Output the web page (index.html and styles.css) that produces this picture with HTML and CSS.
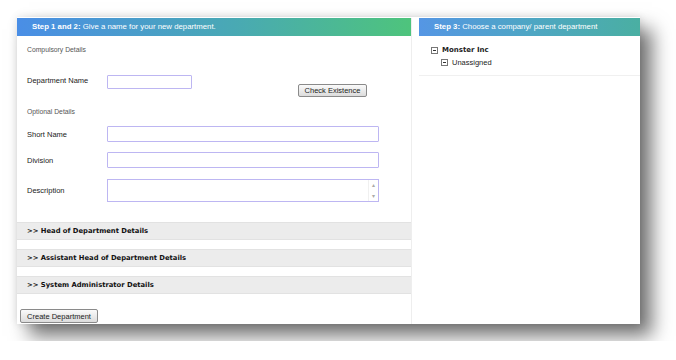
FILE: index.html
```html
<!DOCTYPE html>
<html lang="en">
<head>
    <meta charset="UTF-8">
    <title>New Department</title>
    <link rel="stylesheet" href="styles.css">
</head>
<body>
    <div class="window">
        <div class="main">
            <div class="header header-main"><b>Step 1 and 2:</b> Give a name for your new department.</div>

            <div class="section-label first">Compulsory Details</div>
            <div class="row row-name">
                <label class="field-label">Department Name</label>
                <input type="text" class="input-short">
                <button class="btn btn-check">Check Existence</button>
            </div>

            <div class="section-label optional">Optional Details</div>
            <div class="row">
                <label class="field-label">Short Name</label>
                <input type="text" class="input-long">
            </div>
            <div class="row">
                <label class="field-label">Division</label>
                <input type="text" class="input-long">
            </div>
            <div class="row row-desc">
                <label class="field-label">Description</label>
                <div class="textarea">
                    <span class="scroll">
                        <span class="arrow">&#9652;</span>
                        <span class="arrow">&#9662;</span>
                    </span>
                </div>
            </div>

            <div class="accordion">
                <div class="acc-item">&gt;&gt; Head of Department Details</div>
                <div class="acc-item">&gt;&gt; Assistant Head of Department Details</div>
                <div class="acc-item">&gt;&gt; System Administrator Details</div>
            </div>

            <button class="btn btn-create">Create Department</button>
        </div>

        <div class="side">
            <div class="header header-side"><b>Step 3:</b> Choose a company/ parent department</div>
            <div class="tree">
                <div class="node root"><span class="toggle"></span><b>Monster Inc</b></div>
                <div class="node child"><span class="toggle"></span>Unassigned</div>
            </div>
        </div>
    </div>
</body>
</html>
```

FILE: styles.css
```css
body {
    margin: 0;
    padding: 17px;
    background: #fff;
    font-family: "Liberation Sans", Arial, sans-serif;
    color: #222;
}
.window {
    width: 623px;
    height: 307px;
    box-sizing: border-box;
    padding-top: 1px;
    background: #fff;
    display: flex;
    box-shadow: 12px 12px 18px rgba(0, 0, 0, 0.55), 0 0 8px rgba(0, 0, 0, 0.12);
}
.main {
    width: 395px;
    border-right: 1px solid #eeeeee;
    box-sizing: border-box;
}
.side {
    flex: 1;
    margin-left: 7px;
}
.header {
    height: 18px;
    line-height: 18px;
    color: #fff;
    font-size: 7.8px;
    padding-left: 15px;
    white-space: nowrap;
}
.header-main {
    background: linear-gradient(to right, #4a8ee6, #49a9b4 55%, #4ec47c);
}
.header-side {
    background: linear-gradient(to right, #5596e4, #4ea6c4 50%, #4aafa2);
}
.section-label {
    font-size: 6.8px;
    line-height: 8px;
    color: #555;
    padding-left: 10px;
    margin-top: 10px;
}
.section-label.optional {
    margin-top: 11px;
}
.row {
    display: flex;
    align-items: center;
    padding-left: 10px;
    margin-top: 10px;
}
.field-label {
    width: 80px;
    font-size: 7.5px;
    color: #222;
}
input {
    box-sizing: border-box;
    border: 1px solid #bdb6f2;
    border-radius: 1px;
    margin: 0;
    padding: 0;
}
.input-short {
    width: 85px;
    height: 14px;
}
.input-long {
    width: 272px;
    height: 16px;
}
.row-name {
    margin-top: 21px;
    align-items: flex-start;
}
.row-name .field-label {
    line-height: 11px;
}
.btn {
    font-family: "Liberation Sans", Arial, sans-serif;
    font-size: 7.5px;
    color: #222;
    background: linear-gradient(#fafafa, #dcdcdc);
    border: 1px solid #8a8a8a;
    border-radius: 2px;
    padding: 0 4px;
    height: 13px;
    line-height: 11px;
}
.btn-check {
    margin-left: 106px;
    margin-top: 9px;
    width: 69px;
}
.row-desc {
    margin-top: 11px;
}
.textarea {
    width: 272px;
    height: 23px;
    box-sizing: border-box;
    border: 1px solid #bdb6f2;
    display: flex;
    justify-content: flex-end;
}
.scroll {
    width: 9px;
    display: flex;
    flex-direction: column;
    justify-content: space-between;
    align-items: center;
    color: #aaa;
    font-size: 6px;
    line-height: 10px;
    border-left: 1px solid #f0f0f0;
}
.accordion {
    margin-top: 20px;
    display: flex;
    flex-direction: column;
    gap: 9px;
}
.acc-item {
    height: 18px;
    line-height: 16px;
    box-sizing: border-box;
    background: #ececec;
    border-top: 1px solid #e2e2e2;
    border-bottom: 1px solid #e2e2e2;
    font-family: "DejaVu Sans", Verdana, sans-serif;
    font-size: 6.8px;
    font-weight: bold;
    color: #111;
    padding-left: 10px;
}
.btn-create {
    margin-top: 15px;
    margin-left: 3px;
    width: 78px;
    height: 14px;
}
.tree {
    height: 40px;
    border-bottom: 1px solid #f0f0f0;
    box-sizing: border-box;
    padding-top: 8px;
    font-size: 7.5px;
}
.node {
    display: flex;
    align-items: center;
    gap: 4px;
    height: 12px;
}
.root {
    padding-left: 12px;
    font-family: "DejaVu Sans", Verdana, sans-serif;
    font-size: 7px;
}
.child {
    padding-left: 22px;
    color: #222;
}
.toggle {
    width: 5px;
    height: 5px;
    border: 1px solid #777;
    position: relative;
    background: #fff;
}
.toggle::after {
    content: "";
    position: absolute;
    left: 1px;
    right: 1px;
    top: 2px;
    height: 1px;
    background: #333;
}
```
